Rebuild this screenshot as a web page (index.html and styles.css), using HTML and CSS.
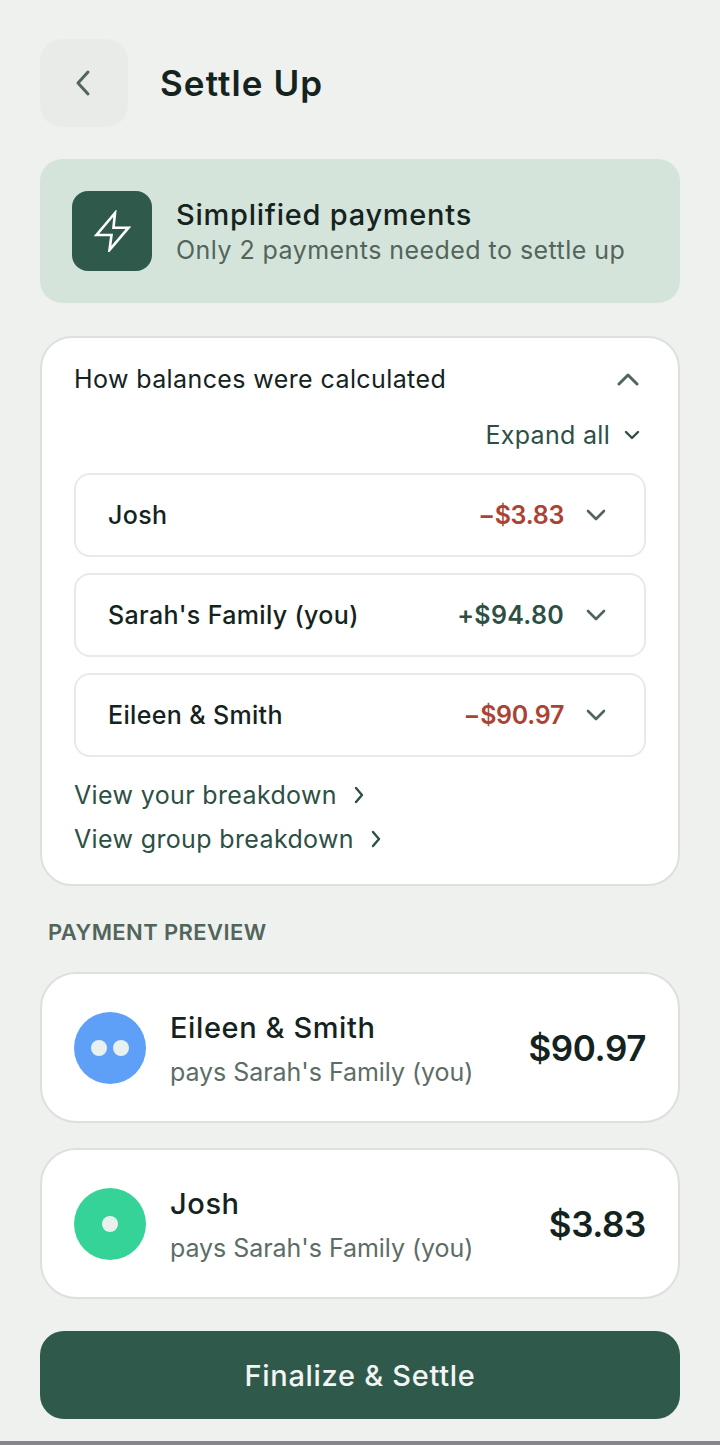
FILE: index.html
```html
<!DOCTYPE html>
<html lang="en">
<head>
    <meta charset="UTF-8">
    <meta name="viewport" content="width=device-width, initial-scale=1.0">
    <title>Settle Up</title>
    <link rel="stylesheet" href="styles.css">
</head>
<body>
    <div class="page">
        <header class="top-bar">
            <button class="back-button">
                <svg width="24" height="32" viewBox="0 0 24 32" fill="none" stroke="#52655c" stroke-width="3" stroke-linecap="round" stroke-linejoin="round"><path d="M17 5 L7 16 L17 27"/></svg>
            </button>
            <h1 class="page-title">Settle Up</h1>
        </header>

        <section class="banner">
            <div class="banner-icon">
                <svg width="40" height="42" viewBox="0 0 40 42" fill="none" stroke="#fff" stroke-width="2.6" stroke-linejoin="miter"><path d="M23 3 L4.5 25 H19.5 L17.5 40 L36.5 17.7 H21.5 Z"/></svg>
            </div>
            <div class="banner-copy">
                <div class="banner-title">Simplified payments</div>
                <div class="banner-text">Only 2 payments needed to settle up</div>
            </div>
        </section>

        <section class="card balances">
            <div class="balances-head">
                <span>How balances were calculated</span>
                <svg class="chevron-up" width="24" height="14" viewBox="0 0 24 14" fill="none" stroke="#52655c" stroke-width="3" stroke-linecap="round" stroke-linejoin="round"><path d="M3 12 L12 3 L21 12"/></svg>
            </div>
            <div class="expand-all">
                <span>Expand all</span>
                <svg width="16" height="10" viewBox="0 0 16 10" fill="none" stroke="#2d4f44" stroke-width="2.4" stroke-linecap="round" stroke-linejoin="round"><path d="M2 2 L8 8 L14 2"/></svg>
            </div>
            <div class="person-list">
                <div class="person-row">
                    <span class="person-name">Josh</span>
                    <span class="amount minus">−$3.83</span>
                    <svg class="row-chevron" width="20" height="12" viewBox="0 0 20 12" fill="none" stroke="#52655c" stroke-width="2.6" stroke-linecap="round" stroke-linejoin="round"><path d="M2 2 L10 10 L18 2"/></svg>
                </div>
                <div class="person-row">
                    <span class="person-name">Sarah's Family (you)</span>
                    <span class="amount plus">+$94.80</span>
                    <svg class="row-chevron" width="20" height="12" viewBox="0 0 20 12" fill="none" stroke="#52655c" stroke-width="2.6" stroke-linecap="round" stroke-linejoin="round"><path d="M2 2 L10 10 L18 2"/></svg>
                </div>
                <div class="person-row">
                    <span class="person-name">Eileen &amp; Smith</span>
                    <span class="amount minus">−$90.97</span>
                    <svg class="row-chevron" width="20" height="12" viewBox="0 0 20 12" fill="none" stroke="#52655c" stroke-width="2.6" stroke-linecap="round" stroke-linejoin="round"><path d="M2 2 L10 10 L18 2"/></svg>
                </div>
            </div>
            <a class="link-row">View your breakdown
                <svg width="10" height="18" viewBox="0 0 10 18" fill="none" stroke="#2d4f44" stroke-width="2.4" stroke-linecap="round" stroke-linejoin="round"><path d="M2 2 L8 9 L2 16"/></svg>
            </a>
            <a class="link-row">View group breakdown
                <svg width="10" height="18" viewBox="0 0 10 18" fill="none" stroke="#2d4f44" stroke-width="2.4" stroke-linecap="round" stroke-linejoin="round"><path d="M2 2 L8 9 L2 16"/></svg>
            </a>
        </section>

        <h2 class="section-label">PAYMENT PREVIEW</h2>

        <section class="card payment">
            <div class="avatar blue"><i class="dot"></i><i class="dot"></i></div>
            <div class="payment-info">
                <div class="payer">Eileen &amp; Smith</div>
                <div class="payee">pays Sarah's Family (you)</div>
            </div>
            <div class="total">$90.97</div>
        </section>

        <section class="card payment">
            <div class="avatar green"><i class="dot"></i></div>
            <div class="payment-info">
                <div class="payer">Josh</div>
                <div class="payee">pays Sarah's Family (you)</div>
            </div>
            <div class="total">$3.83</div>
        </section>

        <button class="finalize">Finalize &amp; Settle</button>
    </div>
    <div class="bottom-strip"></div>
</body>
</html>
```

FILE: styles.css
```css
* {
    box-sizing: border-box;
}
html, body {
    height: 100%;
}
body {
    font-family: Inter, "Noto Sans", sans-serif;
    margin: 0;
    background-color: #eff1ee;
    color: #15231e;
    display: flex;
    flex-direction: column;
    overflow: hidden;
}
.page {
    flex: 1;
    padding: 39px 40px 0;
}
.top-bar {
    display: flex;
    align-items: center;
    gap: 32px;
    height: 88px;
}
.back-button {
    width: 88px;
    height: 88px;
    border: none;
    border-radius: 22px;
    background-color: #e8ebe8;
    display: flex;
    align-items: center;
    justify-content: center;
    padding: 0 2px 0 0;
}
.page-title {
    margin: 0;
    font-size: 35px;
    font-weight: 600;
    letter-spacing: 1.1px;
}
.banner {
    margin-top: 32px;
    height: 144px;
    border-radius: 22px;
    background-color: #d5e4db;
    padding: 0 32px;
    display: flex;
    align-items: center;
    gap: 24px;
}
.banner-icon {
    width: 80px;
    height: 80px;
    border-radius: 16px;
    background-color: #2f5a4b;
    display: flex;
    align-items: center;
    justify-content: center;
}
.banner-copy {
    padding-top: 2px;
}
.banner-title {
    font-size: 29px;
    font-weight: 500;
    line-height: 36px;
    letter-spacing: 0.75px;
}
.banner-text {
    font-size: 25px;
    line-height: 34px;
    color: #52655c;
    letter-spacing: 0.45px;
}
.card {
    background-color: #fff;
    border: 2px solid #dde1de;
    border-radius: 32px;
}
.balances {
    margin-top: 33px;
    height: 550px;
    padding: 0 32px;
}
.balances-head {
    height: 82px;
    display: flex;
    align-items: center;
    justify-content: space-between;
    font-size: 25px;
    letter-spacing: 0.4px;
    padding-right: 6px;
}
.expand-all {
    display: flex;
    align-items: center;
    justify-content: flex-end;
    gap: 14px;
    height: 28px;
    margin-top: 1px;
    font-size: 25px;
    letter-spacing: 0.3px;
    color: #2d4f44;
    padding-right: 6px;
}
.person-list {
    margin-top: 24px;
    display: flex;
    flex-direction: column;
    gap: 16px;
}
.person-row {
    height: 84px;
    border: 2px solid #e8eae8;
    border-radius: 16px;
    padding: 0 38px 0 32px;
    display: flex;
    align-items: center;
}
.person-name {
    flex: 1;
    font-size: 25px;
    font-weight: 500;
    letter-spacing: 0.35px;
}
.amount {
    font-size: 25px;
    font-weight: 600;
    margin-right: 22px;
}
.minus {
    color: #ac4233;
    letter-spacing: -0.3px;
}
.plus {
    color: #2d4f44;
    letter-spacing: 0.3px;
}
.link-row {
    display: flex;
    align-items: center;
    gap: 17px;
    height: 44px;
    font-size: 25px;
    letter-spacing: 0.36px;
    color: #2d4f44;
}
.person-list + .link-row {
    margin-top: 16px;
}
.section-label {
    margin: 31px 0 0 8px;
    font-size: 22px;
    line-height: 30px;
    font-weight: 600;
    letter-spacing: 0.4px;
    color: #52655c;
}
.payment {
    height: 151px;
    margin-top: 25px;
    border-radius: 36px;
    padding: 0 32px;
    display: flex;
    align-items: center;
    gap: 24px;
}
.avatar {
    width: 72px;
    height: 72px;
    border-radius: 50%;
    display: flex;
    align-items: center;
    justify-content: center;
    gap: 6px;
}
.blue {
    background-color: #5e9ff8;
}
.green {
    background-color: #36d399;
}
.dot {
    width: 16px;
    height: 16px;
    border-radius: 50%;
    background-color: #e8f1f0;
}
.payment-info {
    flex: 1;
    padding-top: 2px;
}
.payer {
    font-size: 29px;
    font-weight: 500;
    line-height: 38px;
    letter-spacing: 0.6px;
}
.payee {
    margin-top: 8px;
    font-size: 25px;
    line-height: 34px;
    letter-spacing: -0.05px;
    color: #5d6d66;
}
.total {
    font-size: 35px;
    font-weight: 600;
    letter-spacing: -0.4px;
}
.finalize {
    display: block;
    width: 100%;
    height: 88px;
    margin-top: 32px;
    border: none;
    border-radius: 24px;
    background-color: #2f5a4b;
    color: #f2f5f3;
    font-family: inherit;
    font-size: 29px;
    font-weight: 500;
    letter-spacing: 0.7px;
}
.bottom-strip {
    height: 4px;
    background-color: #87878b;
}
```
